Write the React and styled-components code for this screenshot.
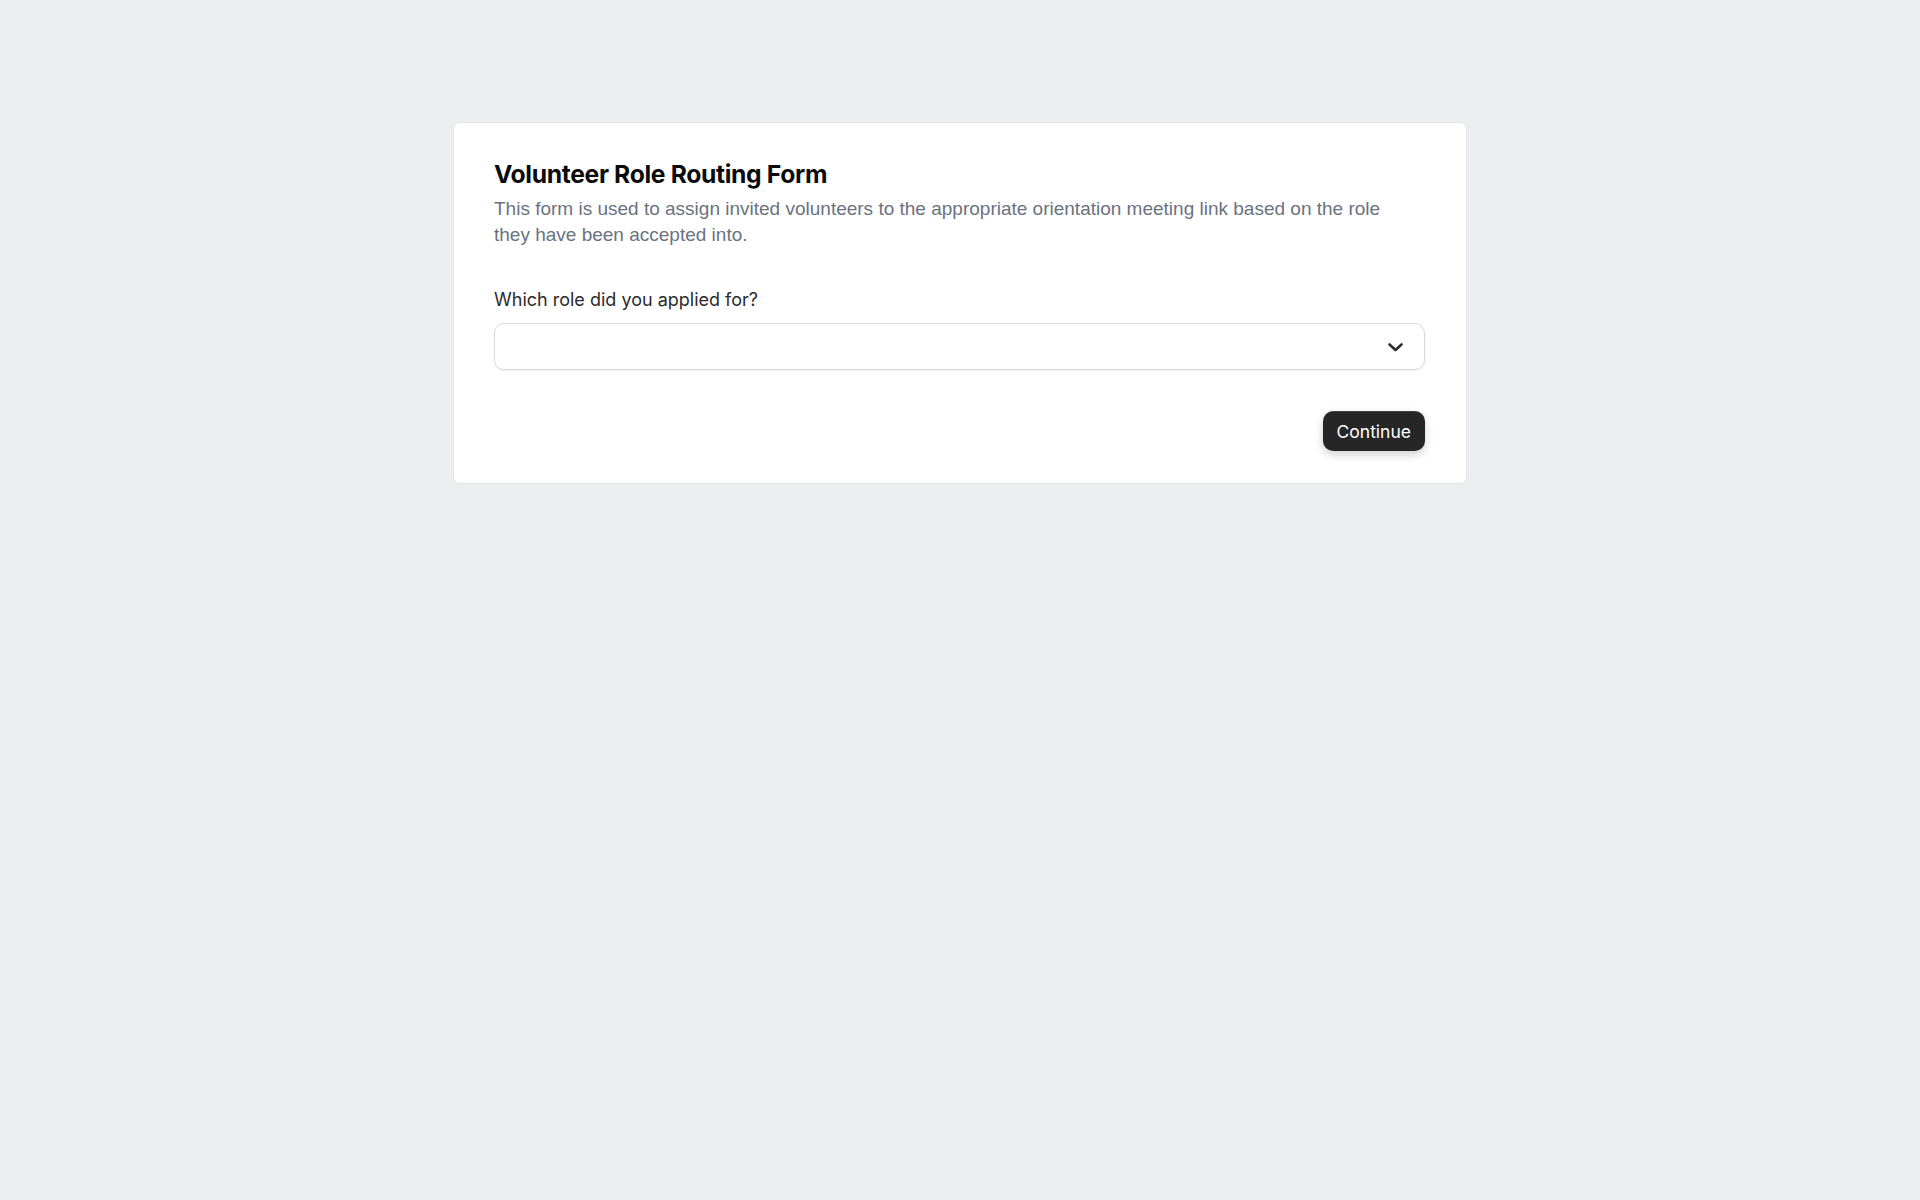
import styled, { createGlobalStyle } from "styled-components";

const GlobalStyle = createGlobalStyle`
  html, body {
    margin: 0;
    padding: 0;
    background: #edeef0;
    min-height: 100%;
  }
  body {
    font-family: Inter, "Liberation Sans", sans-serif;
    -webkit-font-smoothing: antialiased;
  }
`;

const Page = styled.div`
  min-height: 1200px;
  display: flex;
  justify-content: center;
  align-items: flex-start;
  padding-top: 122px;
  box-sizing: border-box;
`;

const Card = styled.form`
  width: 1014px;
  box-sizing: border-box;
  background: #ffffff;
  border: 1px solid #e4e5e8;
  border-radius: 7px;
  padding: 36px 41px 32px 40px;
  display: flex;
  flex-direction: column;
`;

const Title = styled.h1`
  margin: 0;
  font-family: Inter, sans-serif;
  font-weight: 700;
  font-size: 24.7px;
  line-height: 30px;
  letter-spacing: -0.35px;
  color: #0b0b0c;
`;

const Description = styled.p`
  margin: 7px 0 0;
  font-family: "Liberation Sans", Arial, sans-serif;
  font-size: 19px;
  line-height: 25.6px;
  color: #6b7280;
  max-width: 900px;
`;

const Field = styled.div`
  margin-top: 41px;
  display: flex;
  flex-direction: column;
  gap: 11px;
`;

const Label = styled.label`
  font-family: Inter, sans-serif;
  font-size: 18px;
  line-height: 24px;
  color: #2b2b2e;
`;

const SelectBox = styled.div`
  height: 47px;
  box-sizing: border-box;
  border: 1px solid #d9dadd;
  border-radius: 10px;
  box-shadow: 0 1px 2px rgba(0, 0, 0, 0.08);
  display: flex;
  align-items: center;
  justify-content: flex-end;
  padding-right: 20px;
  color: #2e2e30;
`;

const Actions = styled.div`
  margin-top: 41px;
  display: flex;
  justify-content: flex-end;
`;

const Button = styled.button`
  height: 40px;
  padding: 0 14px;
  border: none;
  border-radius: 10px;
  background: #262626;
  color: #ffffff;
  font-family: Inter, sans-serif;
  font-size: 17.5px;
  font-weight: 400;
  box-shadow: 0 4px 10px rgba(0, 0, 0, 0.18), inset 0 1px 0 rgba(255, 255, 255, 0.12);
  cursor: pointer;
`;

function Chevron() {
  return (
    <svg
      width="17"
      height="10"
      viewBox="0 0 17 10"
      fill="none"
      stroke="currentColor"
      strokeWidth="2.6"
      strokeLinecap="round"
      strokeLinejoin="round"
    >
      <path d="M2.5 2.5l6 5.5 6-5.5" />
    </svg>
  );
}

export default function App() {
  return (
    <>
      <GlobalStyle />
      <Page>
        <Card onSubmit={(e) => e.preventDefault()}>
          <Title>Volunteer Role Routing Form</Title>
          <Description>
            This form is used to assign invited volunteers to the appropriate
            orientation meeting link based on the role they have been accepted
            into.
          </Description>
          <Field>
            <Label>Which role did you applied for?</Label>
            <SelectBox>
              <Chevron />
            </SelectBox>
          </Field>
          <Actions>
            <Button type="submit">Continue</Button>
          </Actions>
        </Card>
      </Page>
    </>
  );
}
